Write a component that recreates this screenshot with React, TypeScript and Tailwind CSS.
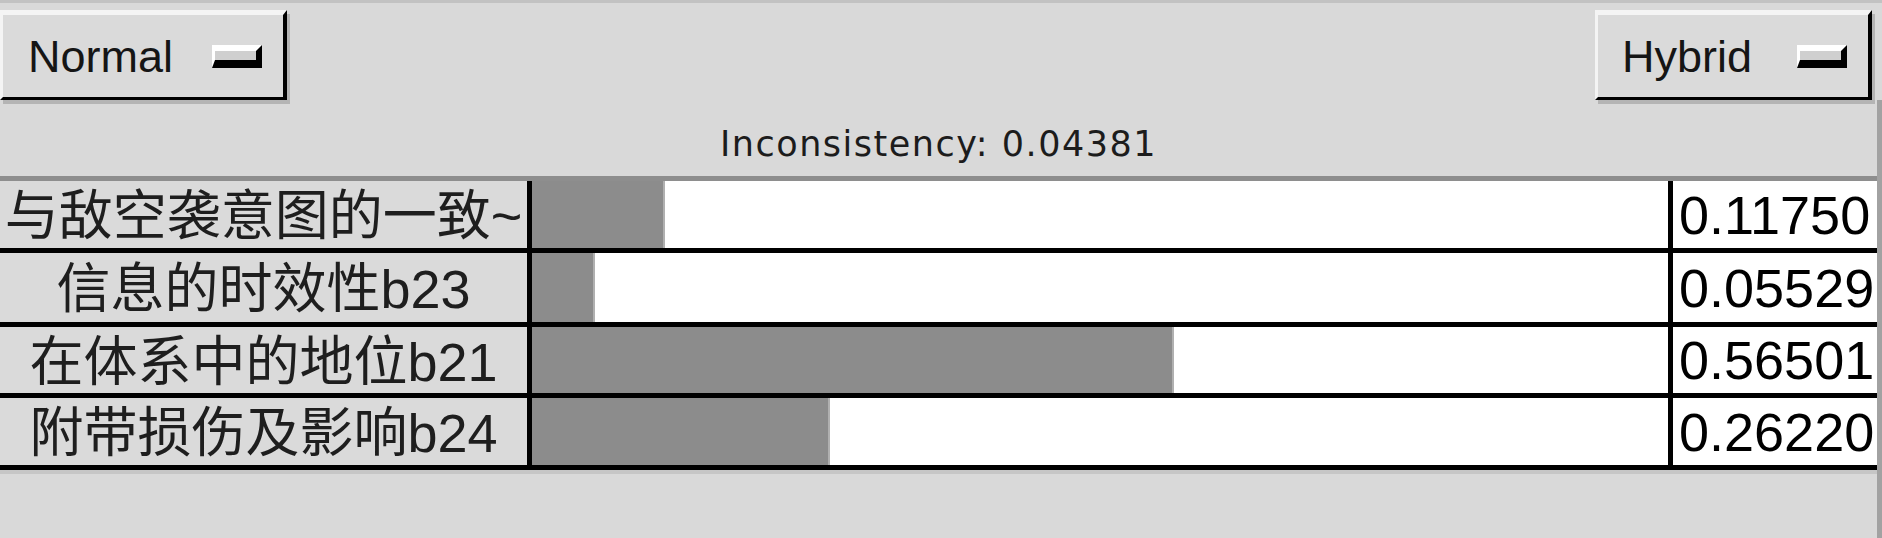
const rows = [
  { label: "与敌空袭意图的一致~", value: 0.1175, h: "h-[72px]" },
  { label: "信息的时效性b23", value: 0.05529, h: "h-[74px]" },
  { label: "在体系中的地位b21", value: 0.56501, h: "h-[71px]" },
  { label: "附带损伤及影响b24", value: 0.2622, h: "h-[72px]" },
];

const TRACK = 1136;

function OptionButton({ label, className }: { label: string; className?: string }) {
  return (
    <div
      className={
        "flex h-[90px] items-center justify-between border-b-[3px] border-l-[3px] border-r-[4px] border-t-[5px] border-b-black border-l-[#f4f4f4] border-r-black border-t-[#f4f4f4] bg-[#dadada] pr-[21px] shadow-[3px_4px_0_#b4b4b4] " +
        (className ?? "")
      }
    >
      <span className="text-[45px] leading-none text-[#151515]">{label}</span>
      <span className="h-[23px] w-[50px] border-b-[8px] border-l-[3px] border-r-[6px] border-t-[6px] border-b-black border-l-white border-r-black border-t-white bg-[#cfcfcf]" />
    </div>
  );
}

export default function App() {
  return (
    <div className="flex h-[538px] w-[1882px] flex-col overflow-hidden border-t-[3px] border-[#c2c2c2] bg-[#d9d9d9] font-['Liberation_Sans','Noto_Sans_CJK_SC',sans-serif]">
      <div className="flex h-[97px] shrink-0 items-start justify-between pt-[7px]">
        <OptionButton label="Normal" className="w-[287px] pl-[25px]" />
        <OptionButton label="Hybrid" className="mr-[10px] w-[277px] pl-[24px]" />
      </div>

      <div className="flex min-h-0 flex-1 flex-col border-r-[5px] border-[#a2a2a2]">
        <div className="flex h-[76px] shrink-0 items-center justify-center pt-[13px] font-['DejaVu_Sans',sans-serif] text-[35px] leading-none tracking-[1.5px] text-[#1c1c1c]">
          Inconsistency: 0.04381
        </div>

        <div className="flex flex-col border-t-[5px] border-[#8e8e8e]">
          {rows.map((r) => (
            <div key={r.label} className={"flex border-b-[5px] border-black " + r.h}>
              <div className="flex w-[527px] shrink-0 items-center justify-center overflow-visible whitespace-nowrap bg-[#dadada] pt-[3px] text-[54px] leading-none text-[#1e1e1e]">
                {r.label}
              </div>
              <div className="w-[5px] shrink-0 bg-black" />
              <div className="flex w-[1136px] shrink-0 bg-white">
                <div
                  className="h-full border-r-[2px] border-[#b0b0b0] bg-[#8c8c8c]"
                  style={{ width: Math.round(r.value * TRACK) }}
                />
              </div>
              <div className="w-[5px] shrink-0 bg-black" />
              <div className="flex flex-1 items-center bg-white pl-[6px] text-[54px] leading-none text-black">
                {r.value.toFixed(5)}
              </div>
            </div>
          ))}
        </div>
        <div className="h-[4px] bg-[#c6c6c6]" />
      </div>
    </div>
  );
}
